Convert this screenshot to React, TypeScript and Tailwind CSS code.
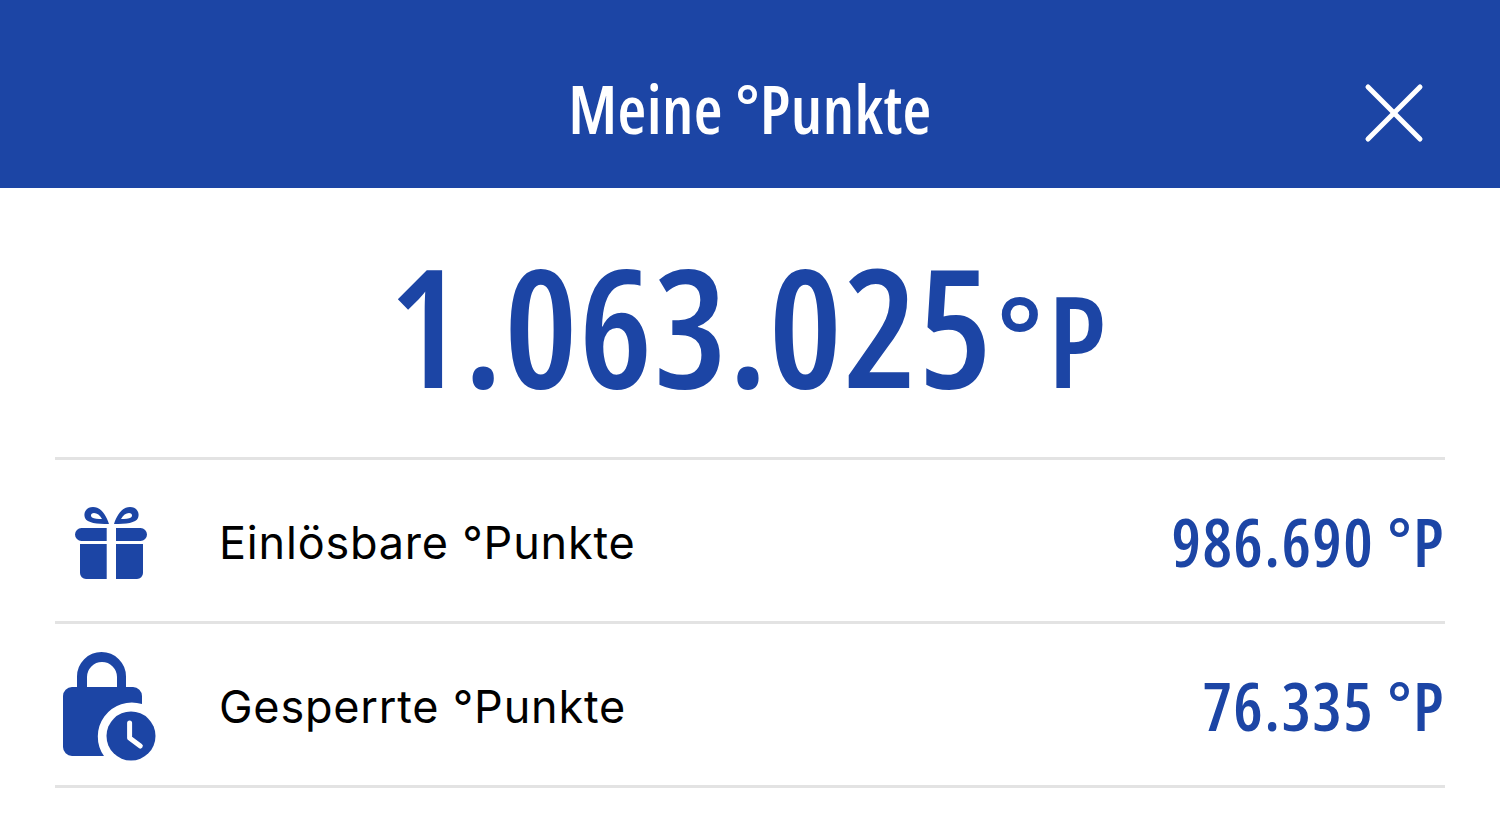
import { X } from 'lucide-react'

const rows = [
  { label: 'Einlösbare °Punkte', value: '986.690 °P', icon: 'gift' },
  { label: 'Gesperrte °Punkte', value: '76.335 °P', icon: 'lock' },
]

function GiftIcon() {
  return (
    <svg width="73" height="72" viewBox="0 0 73 72" fill="#1c45a5">
      <path fillRule="evenodd" d="M34 17 C31 8 26 0 18 0 C11 0 8 6 10 11 C12 16 22 17 34 17Z M27 12 C25 8 22 6 19 6 C16 6 15 9 17 10.5 C19 12 23 12 27 12Z" />
      <path fillRule="evenodd" d="M39 17 C42 8 47 0 55 0 C62 0 65 6 63 11 C61 16 51 17 39 17Z M46 12 C48 8 51 6 54 6 C57 6 58 9 56 10.5 C54 12 50 12 46 12Z" />
      <path d="M6.5 21 H31.7 V34 H6.5 A6.5 6.5 0 0 1 6.5 21Z M41 21 H65.5 A6.5 6.5 0 0 1 65.5 34 H41Z" />
      <path d="M5 37 H31.7 V72 H11 A6 6 0 0 1 5 66Z M41 37 H68 V66 A6 6 0 0 1 62 72 H41Z" />
    </svg>
  )
}

function LockIcon() {
  return (
    <svg width="96" height="109" viewBox="0 0 96 109" fill="#1c45a5">
      <path fillRule="evenodd" d="M14 36 V24.5 A24.5 24.5 0 0 1 63 24.5 V36 H54 V25 A15 15 0 0 0 24 25 V36Z" />
      <path d="M9 35 H70 A9 9 0 0 1 79 44 V52 A34 34 0 0 0 41 104 H9 A9 9 0 0 1 0 95 V44 A9 9 0 0 1 9 35Z" />
      <circle cx="68" cy="84" r="24.5" />
      <path d="M66.6 71 V86 L77.3 94" fill="none" stroke="white" strokeWidth="5" strokeLinecap="round" strokeLinejoin="round" />
    </svg>
  )
}

export default function App() {
  return (
    <div className="h-[827px] w-[1500px] overflow-hidden bg-white font-['Open_Sans',sans-serif]">
      {/* Header */}
      <header className="relative flex h-[188px] items-center justify-center bg-[#1c45a5] pt-[28px]">
        <h1 className="text-[66px] leading-none font-semibold tracking-[0.4px] whitespace-nowrap text-white [font-stretch:75%]">Meine °Punkte</h1>
        <button className="absolute top-[61px] right-[54px] text-white" aria-label="Schließen">
          <X size={104} strokeWidth={1.16} />
        </button>
      </header>

      <div className="px-[55px]">
        {/* Total */}
        <div className="flex h-[269px] items-center justify-center pt-[4px] text-[#1c45a5]">
          <div className="flex items-baseline font-semibold whitespace-nowrap [font-stretch:75%]">
            <span className="text-[165px] leading-none tracking-[1px]">1.063.025</span>
            <span className="ml-[4px] text-[126px] leading-none tracking-[5px]">°P</span>
          </div>
        </div>

        {rows.map((row) => (
          <div key={row.label} className="flex h-[164px] items-center border-t-[3px] border-[#e3e3e3] pt-[4px] last:h-[167px] last:border-b-[3px]">
            <div className="flex w-[164px] shrink-0 justify-center pr-[52px]">
              {row.icon === 'gift' ? <GiftIcon /> : <LockIcon />}
            </div>
            <span className="font-['Inter',sans-serif] text-[45px] tracking-[0.8px] text-black">{row.label}</span>
            <span className="ml-auto -translate-y-[1px] text-[66px] font-semibold tracking-[1.4px] whitespace-nowrap text-[#1c45a5] [font-stretch:75%]">{row.value}</span>
          </div>
        ))}
      </div>
    </div>
  )
}
